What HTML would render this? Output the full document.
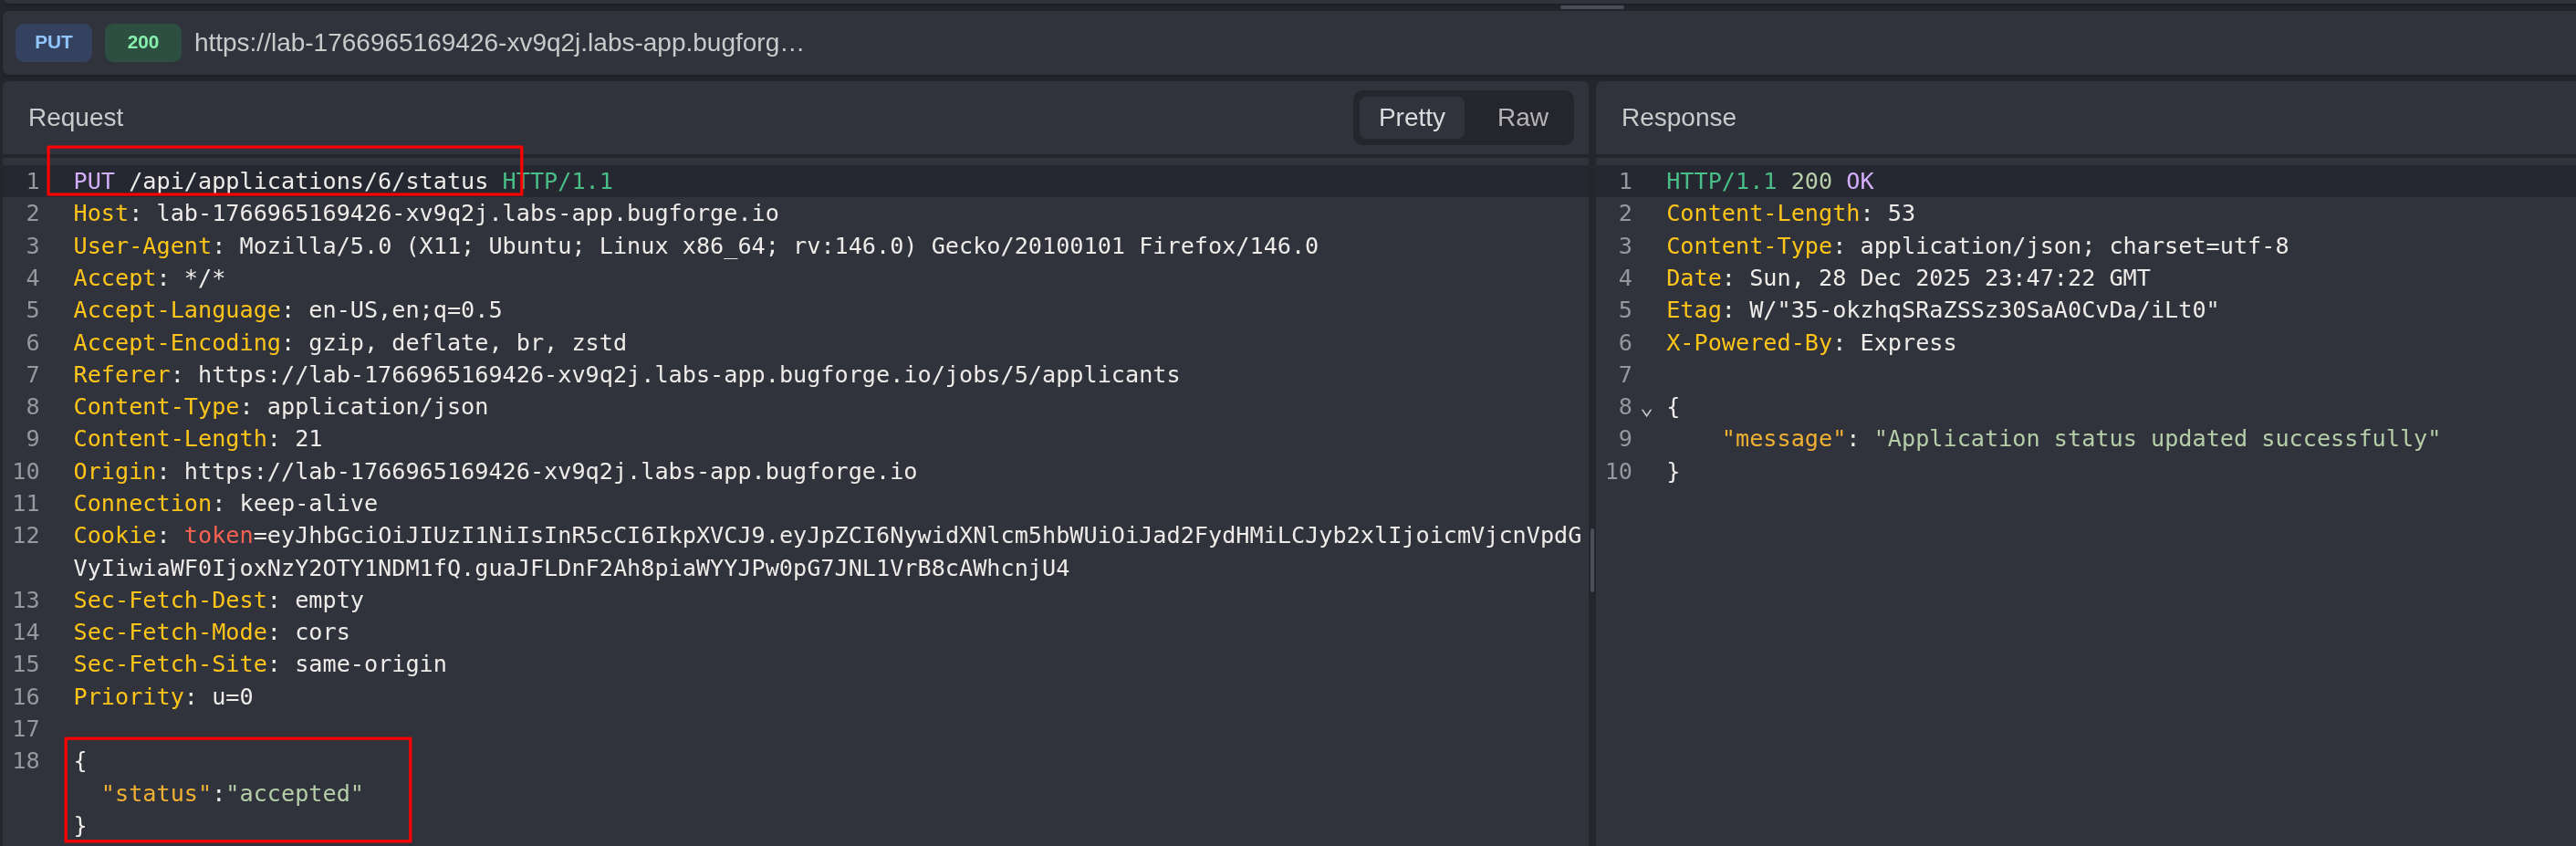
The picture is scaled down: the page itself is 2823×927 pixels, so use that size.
<!DOCTYPE html>
<html lang="en"><head><meta charset="utf-8"><title>Replay</title>
<style>
*{box-sizing:border-box;margin:0;padding:0}
html,body{width:2823px;height:927px;overflow:hidden;background:#25262c;}
body{position:relative;font-family:"Liberation Sans",Arial,sans-serif;color:#dcdcdc}
.abs{position:absolute}
.gl{will-change:transform}
.panel{position:absolute;background:#30333c}
#topstrip{left:3px;top:-10px;width:2840px;height:14px;border-radius:0 0 0 7px;box-shadow:0 2px 4px -1px rgba(0,0,0,.3)}
#handleTop{position:absolute;left:1710px;top:6px;width:70px;height:4px;border-radius:2px;background:#494d59}
#toolbar{left:3px;top:12px;width:2840px;height:69.8px;border-radius:7px;box-shadow:0 2px 4px -1px rgba(0,0,0,.3)}
.badge{position:absolute;top:14px;height:42px;width:84px;border-radius:9px;font-weight:bold;font-size:20.8px;line-height:40.4px;text-align:center}
#bPut{left:14px;background:#34425f;color:#93c5fd}
#b200{left:112px;background:#2d4f41;color:#86efac}
#url{position:absolute;left:209.9px;top:0.9px;height:69.8px;line-height:68px;font-size:28px;color:#cacaca;white-space:nowrap}
#req{left:3px;top:89px;width:1738px;height:860px;border-radius:7px 7px 0 0;overflow:hidden}
#res{left:1749px;top:89px;width:1100px;height:860px;border-radius:7px 0 0 0;overflow:hidden}
.sep{position:absolute;left:0;right:0;top:80px;height:4px;background:#25262c}
.title{position:absolute;left:28px;top:0;height:80px;line-height:80px;font-size:28px;color:#cacaca}
#toggle{position:absolute;left:1480px;top:10px;width:242px;height:60px;border-radius:10px;background:#25262c}
#toggle .on{position:absolute;left:7px;top:7px;width:115px;height:46px;border-radius:7px;background:#30333c;color:#dcdcdc;font-size:28px;line-height:46px;text-align:center}
#toggle .off{position:absolute;left:130px;top:7px;width:112px;height:46px;font-size:28px;line-height:46px;text-align:center;color:#b4b4b8}
.active{position:absolute;left:0;right:0;height:35.28px;background:#252830}
.code{position:absolute;left:0;top:0;font-family:"DejaVu Sans Mono","Liberation Mono",monospace;font-size:25.2px;line-height:35.28px;color:#eeebe8}
.ln{position:absolute;left:0;text-align:right;color:#96989e;height:35.28px;white-space:pre}
.cl{position:absolute;white-space:pre;height:35.28px}
.p{color:#d4aefc}.g{color:#49be86}.y{color:#fdc51a}.r{color:#f86252}.s{color:#b5cea8}.k{color:#efb033}
.redbox{position:absolute;border:3px solid #ff0000}
#split{position:absolute;left:1743px;top:578.8px;width:4px;height:70px;border-radius:2px;background:#494d59}
.fold{position:absolute;font-family:"DejaVu Sans Mono",monospace;font-size:25.2px;line-height:35.28px;color:#c4c4c6}
</style></head><body>
<div class="panel" id="topstrip"></div>
<div id="handleTop"></div>
<div class="panel gl" id="toolbar">
  <div class="badge" id="bPut">PUT</div>
  <div class="badge" id="b200">200</div>
  <div id="url">https://lab-1766965169426-xv9q2j.labs-app.bugforg…</div>
</div>
<div class="panel" id="req">
  <div class="title gl">Request</div>
  <div id="toggle" class="gl"><div class="on">Pretty</div><div class="off">Raw</div></div>
  <div class="sep"></div>
  <div class="active" style="top:92.20px"></div>
</div>
<div class="panel" id="res">
  <div class="title gl">Response</div>
  <div class="sep"></div>
  <div class="active" style="top:92.20px"></div>
</div>
<div id="split"></div>
<div class="code gl">
<div class="ln" style="top:181.20px;width:43.6px">1</div>
<div class="cl" style="top:181.20px;left:80.5px"><span class="p">PUT</span> /api/applications/6/status <span class="g">HTTP/1.1</span></div>
<div class="ln" style="top:216.48px;width:43.6px">2</div>
<div class="cl" style="top:216.48px;left:80.5px"><span class="y">Host</span>: lab-1766965169426-xv9q2j.labs-app.bugforge.io</div>
<div class="ln" style="top:251.76px;width:43.6px">3</div>
<div class="cl" style="top:251.76px;left:80.5px"><span class="y">User-Agent</span>: Mozilla/5.0 (X11; Ubuntu; Linux x86_64; rv:146.0) Gecko/20100101 Firefox/146.0</div>
<div class="ln" style="top:287.04px;width:43.6px">4</div>
<div class="cl" style="top:287.04px;left:80.5px"><span class="y">Accept</span>: */*</div>
<div class="ln" style="top:322.32px;width:43.6px">5</div>
<div class="cl" style="top:322.32px;left:80.5px"><span class="y">Accept-Language</span>: en-US,en;q=0.5</div>
<div class="ln" style="top:357.60px;width:43.6px">6</div>
<div class="cl" style="top:357.60px;left:80.5px"><span class="y">Accept-Encoding</span>: gzip, deflate, br, zstd</div>
<div class="ln" style="top:392.88px;width:43.6px">7</div>
<div class="cl" style="top:392.88px;left:80.5px"><span class="y">Referer</span>: https://lab-1766965169426-xv9q2j.labs-app.bugforge.io/jobs/5/applicants</div>
<div class="ln" style="top:428.16px;width:43.6px">8</div>
<div class="cl" style="top:428.16px;left:80.5px"><span class="y">Content-Type</span>: application/json</div>
<div class="ln" style="top:463.44px;width:43.6px">9</div>
<div class="cl" style="top:463.44px;left:80.5px"><span class="y">Content-Length</span>: 21</div>
<div class="ln" style="top:498.72px;width:43.6px">10</div>
<div class="cl" style="top:498.72px;left:80.5px"><span class="y">Origin</span>: https://lab-1766965169426-xv9q2j.labs-app.bugforge.io</div>
<div class="ln" style="top:534.00px;width:43.6px">11</div>
<div class="cl" style="top:534.00px;left:80.5px"><span class="y">Connection</span>: keep-alive</div>
<div class="ln" style="top:569.28px;width:43.6px">12</div>
<div class="cl" style="top:569.28px;left:80.5px"><span class="y">Cookie</span>: <span class="r">token</span>=eyJhbGciOiJIUzI1NiIsInR5cCI6IkpXVCJ9.eyJpZCI6NywidXNlcm5hbWUiOiJad2FydHMiLCJyb2xlIjoicmVjcnVpdG</div>
<div class="cl" style="top:604.56px;left:80.5px">VyIiwiaWF0IjoxNzY2OTY1NDM1fQ.guaJFLDnF2Ah8piaWYYJPw0pG7JNL1VrB8cAWhcnjU4</div>
<div class="ln" style="top:639.84px;width:43.6px">13</div>
<div class="cl" style="top:639.84px;left:80.5px"><span class="y">Sec-Fetch-Dest</span>: empty</div>
<div class="ln" style="top:675.12px;width:43.6px">14</div>
<div class="cl" style="top:675.12px;left:80.5px"><span class="y">Sec-Fetch-Mode</span>: cors</div>
<div class="ln" style="top:710.40px;width:43.6px">15</div>
<div class="cl" style="top:710.40px;left:80.5px"><span class="y">Sec-Fetch-Site</span>: same-origin</div>
<div class="ln" style="top:745.68px;width:43.6px">16</div>
<div class="cl" style="top:745.68px;left:80.5px"><span class="y">Priority</span>: u=0</div>
<div class="ln" style="top:780.96px;width:43.6px">17</div>
<div class="ln" style="top:816.24px;width:43.6px">18</div>
<div class="cl" style="top:816.24px;left:80.5px">{</div>
<div class="cl" style="top:851.52px;left:80.5px">  <span class="k">"status"</span>:<span class="s">"accepted"</span></div>
<div class="cl" style="top:886.80px;left:80.5px">}</div>
<div class="ln" style="top:181.20px;width:1789px">1</div>
<div class="cl" style="top:181.20px;left:1826.2px"><span class="g">HTTP/1.1</span> <span class="s">200</span> <span class="p">OK</span></div>
<div class="ln" style="top:216.48px;width:1789px">2</div>
<div class="cl" style="top:216.48px;left:1826.2px"><span class="y">Content-Length</span>: 53</div>
<div class="ln" style="top:251.76px;width:1789px">3</div>
<div class="cl" style="top:251.76px;left:1826.2px"><span class="y">Content-Type</span>: application/json; charset=utf-8</div>
<div class="ln" style="top:287.04px;width:1789px">4</div>
<div class="cl" style="top:287.04px;left:1826.2px"><span class="y">Date</span>: Sun, 28 Dec 2025 23:47:22 GMT</div>
<div class="ln" style="top:322.32px;width:1789px">5</div>
<div class="cl" style="top:322.32px;left:1826.2px"><span class="y">Etag</span>: W/"35-okzhqSRaZSSz30SaA0CvDa/iLt0"</div>
<div class="ln" style="top:357.60px;width:1789px">6</div>
<div class="cl" style="top:357.60px;left:1826.2px"><span class="y">X-Powered-By</span>: Express</div>
<div class="ln" style="top:392.88px;width:1789px">7</div>
<div class="ln" style="top:428.16px;width:1789px">8</div>
<div class="cl" style="top:428.16px;left:1826.2px">{</div>
<div class="ln" style="top:463.44px;width:1789px">9</div>
<div class="cl" style="top:463.44px;left:1826.2px">    <span class="k">"message"</span>: <span class="s">"Application status updated successfully"</span></div>
<div class="ln" style="top:498.72px;width:1789px">10</div>
<div class="cl" style="top:498.72px;left:1826.2px">}</div>
</div>
<div class="fold gl" style="left:1796.8px;top:428.16px">⌄</div>
<svg class="abs" style="left:0;top:0" width="2823" height="927" viewBox="0 0 2823 927" fill="none" stroke="#ff0000" stroke-width="3.2">
<rect x="53.1" y="161.1" width="518.7" height="51.9"/>
<rect x="72.2" y="809.2" width="377.6" height="112.6"/>
</svg>
</body></html>
